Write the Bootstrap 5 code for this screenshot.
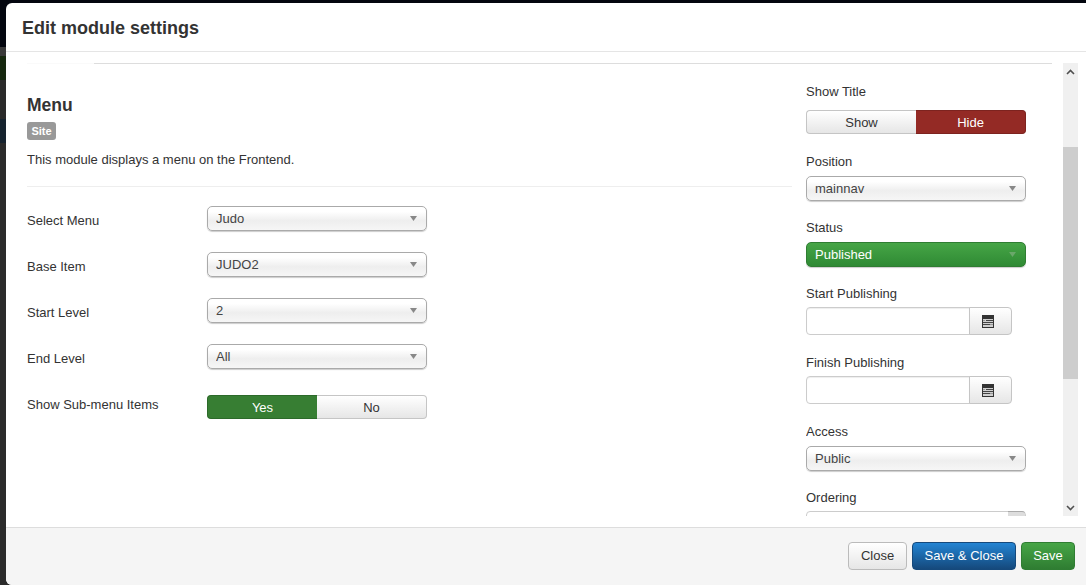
<!DOCTYPE html>
<html lang="en">
<head>
<meta charset="utf-8">
<title>Edit module settings</title>
<link href="https://cdn.jsdelivr.net/npm/bootstrap@5.3.0/dist/css/bootstrap.min.css" rel="stylesheet">
<style>
html,body{height:585px;overflow:hidden}
body{font-family:"Liberation Sans",Arial,sans-serif;font-size:13px;line-height:18px;color:#333;padding:3px 0 0 6px;
background:linear-gradient(#03060f 0 47px,#3a3a3a 47px 56px,#16280f 56px 80px,#2a2a2a 80px 119px,#16232f 119px 143px,#2b2b2b 143px)}
.modal-content{height:582px;border:0;border-radius:6px 0 0 6px;overflow:hidden;background:#fff}
.modal-header{height:49px;padding:1px 16px 0;border-bottom:1px solid #e5e5e5;border-radius:0}
.modal-title{font-size:18px;font-weight:700;line-height:24px;color:#333}
.modal-body{padding:0;height:475px;flex:none;overflow:hidden}
.modal-footer{height:58px;padding:0 11px 2px 0;background:#f5f5f5;border-top:1px solid #ddd;border-radius:0;gap:5px;flex-wrap:nowrap}
.modal-footer>*{margin:0}
.main{width:1046px;padding-left:21px;flex:none}
.tabs{display:flex;height:1px;margin-top:11px}
.tabs span{width:67px;background:#fafafa}
.tabs i{flex:1;background:#ddd}
.left{width:765px;flex:none}
.right{width:220px;margin-left:14px;flex:none;height:452px;overflow:hidden;padding-top:19px}
h4{font-size:17.500px;font-weight:700;line-height:20px;margin:31px 0 7px;color:#333}
.site{display:block;width:29px;background:#999;border-radius:3px;color:#fff;font-size:11px;font-weight:700;line-height:18px;text-align:center}
.desc{margin:11px 0 17px;line-height:18px}
hr{margin:0 0 19px;border-top:1px solid #eee;opacity:1}
.frow{display:flex;height:46px}
.frow label{width:180px;flex:none;margin:0;padding-top:6px}
.frow>.field{width:220px}
.frow.sub .field{padding-top:5px}
.form-select.chz{height:25px;padding:1px 8px 0;border:1px solid #aaa;border-radius:5px;font-size:13px;color:#444;line-height:22px;
box-shadow:0 1px 1px rgba(0,0,0,.2);
background:url("data:image/svg+xml,%3Csvg xmlns='http://www.w3.org/2000/svg' width='8' height='6'%3E%3Cpath d='M0 0h8L4 6z' fill='%23888'/%3E%3C/svg%3E") no-repeat right 9px center/7px 5px,linear-gradient(#fff 0,#fff 20%,#eee 60%,#f6f6f6 100%)}
.form-select.green{color:#fff;border-color:#2f7d32;background:url("data:image/svg+xml,%3Csvg xmlns='http://www.w3.org/2000/svg' width='8' height='6'%3E%3Cpath d='M0 0h8L4 6z' fill='%236aa86a'/%3E%3C/svg%3E") no-repeat right 9px center/7px 5px,linear-gradient(#46a546,#2f8a34)}
.rlabel{margin:0 0 5px;line-height:18px;display:block}
.rlabel.big{margin-bottom:9px}
.rlabel.tight{margin-bottom:4px}
.rgroup{margin-bottom:18px}
.rgroup.first{margin-bottom:19px}
.rgroup.tall{margin-bottom:19px}
.tog{display:flex;width:220px;height:24px}
.tog .btn{flex:1 1 50%;height:24px;padding:0;font-size:13px;line-height:23px;border-radius:0;color:#333;border:1px solid #c5c5c5;background:linear-gradient(#fff,#e6e6e6)}
.tog .btn:first-child{border-radius:4px 0 0 4px;border-right:0}
.tog .btn:last-child{border-radius:0 4px 4px 0;border-left:0}
.tog .btn.hide,.tog .btn.hide:hover{background:#942a25;border-color:#7d231f;color:#fff}
.tog .btn.yes,.tog .btn.yes:hover{background:#377e33;border-color:#2c6a2a;color:#fff}
.cal{width:206px;height:28px;flex-wrap:nowrap}
.cal .form-control{height:28px;min-height:0;padding:0 6px;border:1px solid #ccc;border-radius:4px 0 0 4px;box-shadow:inset 0 1px 1px rgba(0,0,0,.07);font-size:13px}
.cal .btn{width:43px;flex:none;height:28px;padding:0 5px 0 0;border:1px solid #c5c5c5;border-radius:0 4px 4px 0;background:linear-gradient(#fff,#e6e6e6);display:flex;align-items:center;justify-content:center}
.ord{height:30px;width:220px;border:1px solid #ccc;border-radius:4px;display:flex;justify-content:flex-end;background:#fff}
.ord i{display:block;width:17px;background:#ddd;border-top:1px solid #aaa;margin-top:-1px;border-radius:0 3px 0 0}
.sbar{width:15px;height:453px;margin:11px 0 0 11px;background:#f0f0f0;display:flex;flex-direction:column;flex:none}
.sbar .arr{height:17px;flex:none;display:flex;align-items:center;justify-content:center}
.sbar .t1{height:67px;flex:none}
.sbar .th{height:232px;background:#cdcdcd;flex:none}
.sbar .t2{flex:1}
.btn.f{height:28px;padding:0;font-size:13px;line-height:26px;border-radius:4px}
.btn.fc{width:59px;color:#333;border:1px solid #bbb;background:linear-gradient(#fff,#e6e6e6)}
.btn.fs{width:104px;color:#fff;border:1px solid #15497c;background:linear-gradient(#2384d3,#15497c)}
.btn.fg{width:54px;color:#fff;border:1px solid #2f7d32;background:linear-gradient(#46a546,#2f7d32)}
</style>
</head>
<body>
<div class="modal-content">
  <div class="modal-header"><h3 class="modal-title">Edit module settings</h3></div>
  <div class="modal-body d-flex">
    <div class="main">
      <div class="tabs"><span></span><i></i></div>
      <div class="d-flex">
        <div class="left">
          <h4>Menu</h4>
          <span class="site">Site</span>
          <p class="desc">This module displays a menu on the Frontend.</p>
          <hr>
          <div class="frow"><label>Select Menu</label><div class="field"><select class="form-select chz"><option>Judo</option></select></div></div>
          <div class="frow"><label>Base Item</label><div class="field"><select class="form-select chz"><option>JUDO2</option></select></div></div>
          <div class="frow"><label>Start Level</label><div class="field"><select class="form-select chz"><option>2</option></select></div></div>
          <div class="frow"><label>End Level</label><div class="field"><select class="form-select chz"><option>All</option></select></div></div>
          <div class="frow sub"><label>Show Sub-menu Items</label><div class="field"><div class="tog"><button class="btn yes">Yes</button><button class="btn">No</button></div></div></div>
        </div>
        <div class="right">
          <div class="rgroup first"><span class="rlabel big">Show Title</span><div class="tog"><button class="btn">Show</button><button class="btn hide">Hide</button></div></div>
          <div class="rgroup"><span class="rlabel">Position</span><select class="form-select chz"><option>mainnav</option></select></div>
          <div class="rgroup"><span class="rlabel">Status</span><select class="form-select chz green"><option>Published</option></select></div>
          <div class="rgroup tall"><span class="rlabel tight">Start Publishing</span><div class="input-group cal"><input class="form-control" type="text" aria-label="Start Publishing"><button class="btn" aria-label="Calendar"><svg width="12" height="13" viewBox="0 0 12 13"><path d="M0 0h12v13H0z" fill="#333"/><path d="M1 4h10v8H1z" fill="#cfcfcf"/><path d="M4 5h7v1H4zM1 7h10v1H1zM1 9h7v1H1z" fill="#444"/><path d="M1 5h2v1H1zM8 9h3v1H8z" fill="#999"/></svg></button></div></div>
          <div class="rgroup tall"><span class="rlabel tight">Finish Publishing</span><div class="input-group cal"><input class="form-control" type="text" aria-label="Finish Publishing"><button class="btn" aria-label="Calendar"><svg width="12" height="13" viewBox="0 0 12 13"><path d="M0 0h12v13H0z" fill="#333"/><path d="M1 4h10v8H1z" fill="#cfcfcf"/><path d="M4 5h7v1H4zM1 7h10v1H1zM1 9h7v1H1z" fill="#444"/><path d="M1 5h2v1H1zM8 9h3v1H8z" fill="#999"/></svg></button></div></div>
          <div class="rgroup"><span class="rlabel">Access</span><select class="form-select chz"><option>Public</option></select></div>
          <div class="rgroup"><span class="rlabel tight">Ordering</span><div class="ord"><i></i></div></div>
        </div>
      </div>
    </div>
    <div class="sbar">
      <div class="arr"><svg width="9" height="6" viewBox="0 0 9 6"><path d="M1 5l3.500-3.500L8 5" fill="none" stroke="#505050" stroke-width="1.600"/></svg></div>
      <div class="t1"></div><div class="th"></div><div class="t2"></div>
      <div class="arr"><svg width="9" height="6" viewBox="0 0 9 6"><path d="M1 1l3.500 3.500L8 1" fill="none" stroke="#505050" stroke-width="1.600"/></svg></div>
    </div>
  </div>
  <div class="modal-footer">
    <button class="btn f fc">Close</button>
    <button class="btn f fs">Save &amp; Close</button>
    <button class="btn f fg">Save</button>
  </div>
</div>
<script src="https://cdn.jsdelivr.net/npm/bootstrap@5.3.0/dist/js/bootstrap.bundle.min.js"></script>
</body>
</html>
